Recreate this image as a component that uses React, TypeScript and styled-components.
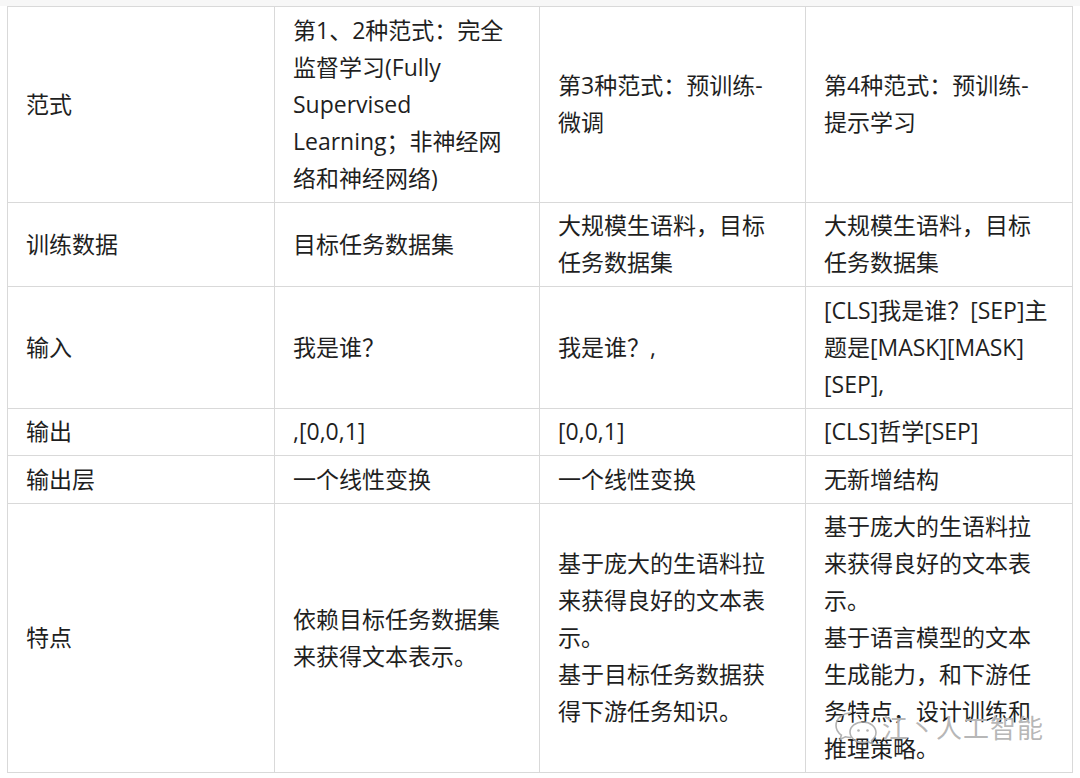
import React from "react";
import styled, { createGlobalStyle } from "styled-components";

const Global = createGlobalStyle`
  html, body { margin: 0; padding: 0; background: #ffffff; }
  body { width: 1080px; height: 778px; overflow: hidden; }
`;

const Page = styled.div`
  position: relative;
  width: 1080px;
  height: 778px;
  box-sizing: border-box;
  padding: 6px 0 0 7px;
  background: linear-gradient(#f7f7f7 0, #f7f7f7 6px, #ffffff 6px);
`;

const Grid = styled.div`
  display: grid;
  grid-template-columns: 267px 265px 266px 267px;
  border-top: 1px solid #d9d9d9;
  border-left: 1px solid #d9d9d9;
  background: #ffffff;
  width: max-content;
`;

const Cell = styled.div`
  box-sizing: border-box;
  display: flex;
  flex-direction: column;
  justify-content: center;
  padding: 4.75px 8px 4.75px 18px;
  border-right: 1px solid #d9d9d9;
  border-bottom: 1px solid #d9d9d9;
  font-family: "Open Sans", "Noto Sans CJK SC", sans-serif;
  font-size: 23px;
  color: #1f1f1f;
  white-space: nowrap;
`;

const Line = styled.div`
  height: 37px;
  line-height: 37px;
  overflow: visible;
`;

const Watermark = styled.div`
  position: absolute;
  left: 834px;
  top: 709px;
  display: flex;
  align-items: center;
  gap: 4px;
  pointer-events: none;
  color: rgba(170, 170, 170, 0.85);
  font-family: "Noto Sans CJK SC", sans-serif;
  font-size: 26px;
  line-height: 36px;
  letter-spacing: 1px;
  text-shadow: 0 0 1px rgba(255, 255, 255, 0.9);
`;

const rows: string[][][] = [
  [
    ["范式"],
    ["第1、2种范式：完全", "监督学习(Fully", "Supervised", "Learning；非神经网", "络和神经网络)"],
    ["第3种范式：预训练-", "微调"],
    ["第4种范式：预训练-", "提示学习"],
  ],
  [
    ["训练数据"],
    ["目标任务数据集"],
    ["大规模生语料，目标", "任务数据集"],
    ["大规模生语料，目标", "任务数据集"],
  ],
  [
    ["输入"],
    ["我是谁？"],
    ["我是谁？,"],
    ["[CLS]我是谁？[SEP]主", "题是[MASK][MASK]", "[SEP],"],
  ],
  [["输出"], [",[0,0,1]"], ["[0,0,1]"], ["[CLS]哲学[SEP]"]],
  [["输出层"], ["一个线性变换"], ["一个线性变换"], ["无新增结构"]],
  [
    ["特点"],
    ["依赖目标任务数据集", "来获得文本表示。"],
    ["基于庞大的生语料拉", "来获得良好的文本表", "示。", "基于目标任务数据获", "得下游任务知识。"],
    [
      "基于庞大的生语料拉",
      "来获得良好的文本表",
      "示。",
      "基于语言模型的文本",
      "生成能力，和下游任",
      "务特点，设计训练和",
      "推理策略。",
    ],
  ],
];

const WeChatIcon = () => (
  <svg width="44" height="34" viewBox="0 0 44 34" fill="none" stroke="rgba(165,165,165,0.85)" strokeWidth="1.6">
    <path d="M17 3C8.7 3 2 8.6 2 15.5c0 3.9 2.1 7.3 5.4 9.6L6 29.5l5.3-2.7c1.8.5 3.7.8 5.7.8" />
    <path d="M29 12c7.2 0 13 4.8 13 10.6 0 3.2-1.7 6-4.5 8l1.1 3.4-4.3-2.2c-1.6.5-3.4.8-5.3.8-7.2 0-13-4.7-13-10.5S21.8 12 29 12z" />
    <circle cx="24.5" cy="20.5" r="1.3" fill="rgba(165,165,165,0.85)" stroke="none" />
    <circle cx="33.5" cy="20.5" r="1.3" fill="rgba(165,165,165,0.85)" stroke="none" />
  </svg>
);

export default function App() {
  return (
    <>
      <Global />
      <Page>
        <Grid>
          {rows.map((row, ri) =>
            row.map((lines, ci) => (
              <Cell key={`${ri}-${ci}`}>
                {lines.map((l, li) => (
                  <Line key={li}>{l}</Line>
                ))}
              </Cell>
            ))
          )}
        </Grid>
        <Watermark>
          <WeChatIcon />
          <span>江丶人工智能</span>
        </Watermark>
      </Page>
    </>
  );
}
